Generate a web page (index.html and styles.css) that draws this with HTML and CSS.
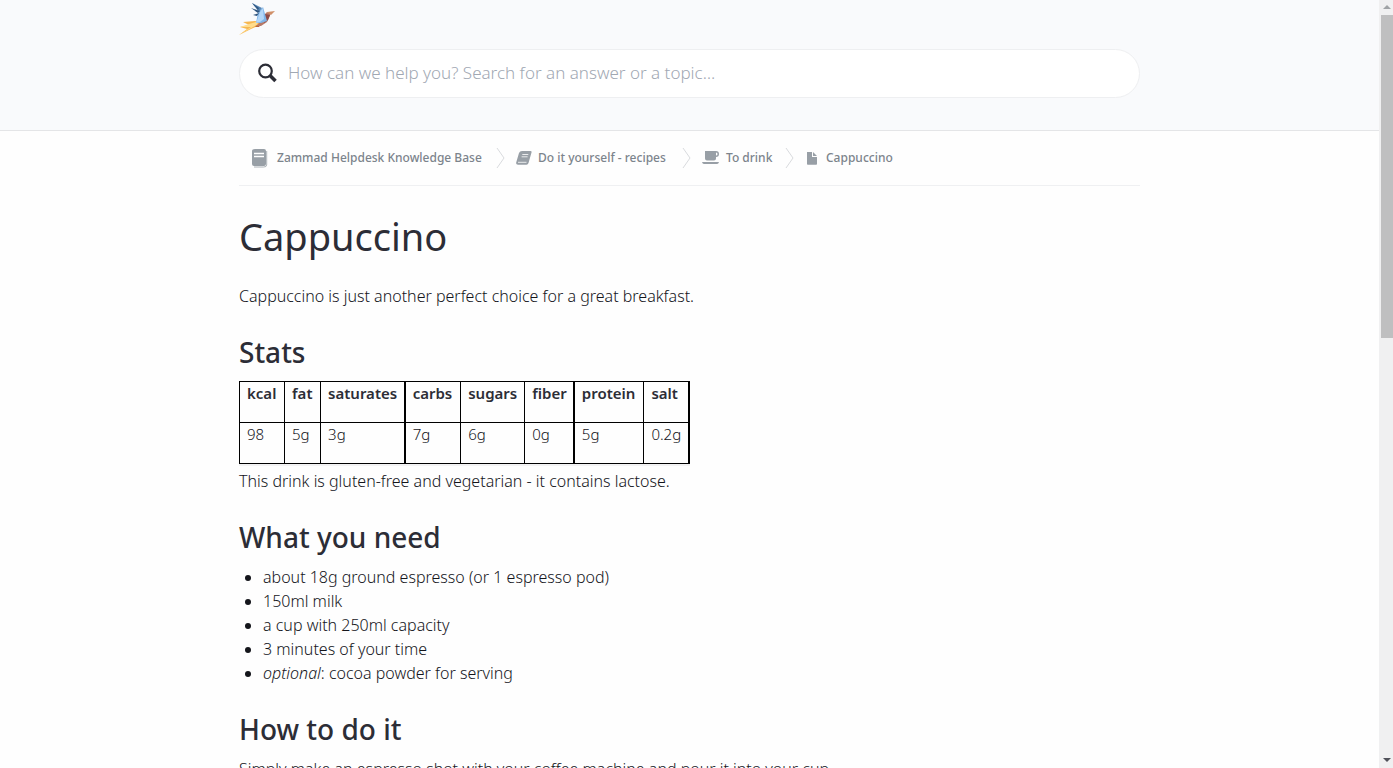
FILE: index.html
```html
<!DOCTYPE html>
<html lang="en">
<head>
<meta charset="utf-8">
<meta name="viewport" content="width=device-width, initial-scale=1">
<title>Cappuccino</title>
<link rel="stylesheet" href="styles.css">
</head>
<body>
<div class="window">
  <div class="page">
    <header class="header">
      <div class="container">
        <a class="logo" href="#" aria-label="Home">
          <svg width="36" height="32" viewBox="0 0 36 32" aria-hidden="true">
            <path fill="#f6b750" d="M0 32 8 26 1 24 10 22 4 19 16 18 20 19 21 22 12 26z"/>
            <path fill="#ffdc8c" d="M0 32 12 24 1 24 10 21 17 19 19 21z"/>
            <path fill="#b8683f" d="M18 22 23 20 20 24 16 24z"/>
            <path fill="#b77968" d="M25 12 28 9 32 10 30 15 28 19 22 23 18 23z"/>
            <path fill="#8c4b49" d="M26 11 31 12 29 17 25 20z"/>
            <path fill="#d08f68" d="M28 9 36 8 32 12z"/>
            <path fill="#7fb4e8" d="M17 20 19 10 24 4 28 18 22 20z"/>
            <path fill="#b3d6f8" d="M17 20 21 9 24 5 25 16 21 19z"/>
            <path fill="#5685b4" d="M13 0 23 5 20 9z"/>
            <path fill="#2f557f" d="M13 0 20 5 19 7zM12 5 21 8 19 10zM14 12 20 10 18 13z"/>
          </svg>
        </a>
        <form class="search">
          <svg class="search-icon" width="20" height="20" viewBox="0 0 20 20" aria-hidden="true"><circle cx="7.500" cy="8" r="6.300" fill="none" stroke="#2c2d36" stroke-width="2.200"/><path d="m12 12.500 5.500 5.500" stroke="#2c2d36" stroke-width="3.500"/></svg>
          <input class="search-input" type="search" aria-label="Search" placeholder="How can we help you? Search for an answer or a topic…">
        </form>
      </div>
    </header>
    <main class="container">
      <nav class="breadcrumbs" aria-label="Breadcrumbs">
        <a class="crumb crumb-base" href="#">
          <svg width="17" height="20" viewBox="0 0 17 20" aria-hidden="true"><path d="M3 1h9q2 0 2 2v13q0 2-2 2H2q-2 0-2-2V3q0-2 3-2z" fill="#989fa6"/><path d="M2 5.500h10M2 8.500h10" stroke="#fff" stroke-width="1.300"/><path d="M14.700 3v14q0 2-3 2H2" fill="none" stroke="#989fa6" stroke-width=".8"/></svg>
          <span>Zammad Helpdesk Knowledge Base</span></a>
        <svg class="arrow" width="10" height="22" viewBox="0 0 10 22" aria-hidden="true"><path d="m1 1 7 10-7 10"/></svg>
        <a class="crumb crumb-recipes" href="#">
          <svg width="16" height="16" viewBox="0 0 16 16" aria-hidden="true"><path fill="#989fa6" d="M6 1h8.500q1.500.2 1 1.500L12.500 13q-.5 1.700-2 1.700H2Q-.3 14.700.2 12.500L3 3q.7-2 3-2z"/><path d="M6.300 4.500h6M5.600 6.800h6M2 12.300h8.500" fill="none" stroke="#fff" stroke-width=".8"/></svg>
          <span>Do it yourself - recipes</span></a>
        <svg class="arrow" width="10" height="22" viewBox="0 0 10 22" aria-hidden="true"><path d="m1 1 7 10-7 10"/></svg>
        <a class="crumb crumb-drink" href="#">
          <svg width="18" height="16" viewBox="0 0 18 16" aria-hidden="true"><path fill="#989fa6" fill-rule="evenodd" d="M3 1h11q3 0 3 3t-3 3v1.500q0 2-2 2H5q-2 0-2-2zm11 1.500v3q1.500 0 1.500-1.500T14 2.500zM0 12h17q-.5 2-2 2H2q-1.500 0-2-2z"/></svg>
          <span>To drink</span></a>
        <svg class="arrow" width="10" height="22" viewBox="0 0 10 22" aria-hidden="true"><path d="m1 1 7 10-7 10"/></svg>
        <a class="crumb crumb-page" href="#" aria-current="page">
          <svg width="10" height="14" viewBox="0 0 10 14" aria-hidden="true"><path fill="#989fa6" d="M0 1h5v5h5v7q0 .8-.8.8H.8Q0 13.800 0 13zM6 1l4 4H6z"/></svg>
          <span>Cappuccino</span></a>
      </nav>
      <article class="article">
        <h1>Cappuccino</h1>
        <p>Cappuccino is just another perfect choice for a great breakfast.</p>
        <h2>Stats</h2>
        <table class="stats">
          <colgroup><col class="c45"><col class="c36"><col class="c84"><col class="c56"><col class="c64"><col class="c49"><col class="c70"><col class="c45"></colgroup>
          <thead><tr><th>kcal</th><th>fat</th><th class="thick">saturates</th><th>carbs</th><th>sugars</th><th class="thick">fiber</th><th>protein</th><th class="thick">salt</th></tr></thead>
          <tbody><tr><td>98</td><td>5g</td><td class="thick">3g</td><td>7g</td><td>6g</td><td class="thick">0g</td><td>5g</td><td class="thick">0.2g</td></tr></tbody>
        </table>
        <p>This drink is gluten-free and vegetarian - it contains lactose.</p>
        <h2>What you need</h2>
        <ul>
          <li>about 18g ground espresso (or 1 espresso pod)</li>
          <li>150ml milk</li>
          <li>a cup with 250ml capacity</li>
          <li>3 minutes of your time</li>
          <li><i>optional</i>: cocoa powder for serving</li>
        </ul>
        <h2>How to do it</h2>
        <p>Simply make an espresso shot with your coffee machine and pour it into your cup.</p>
      </article>
    </main>
  </div>
  <div class="scrollbar" aria-hidden="true">
    <svg width="14" height="15" viewBox="0 0 14 15"><path fill="#a0a3a6" d="M8 5 4 9h8z"/></svg>
    <div class="thumb"></div>
    <svg class="down" width="14" height="15" viewBox="0 0 14 15"><path fill="#50515a" d="M4 5h8L8 9z"/></svg>
  </div>
</div>
</body>
</html>
```
FILE: styles.css
```css
* { box-sizing: border-box; }
body {
  margin: 0;
  background: #fefefe;
  color: #2c2d36;
  font: 350 16px/24px "Noto Sans", "Open Sans", sans-serif;
}
.window { display: flex; height: 100vh; overflow: hidden; }
.page { flex: 1; min-width: 0; overflow: hidden; }
.container { width: 100%; max-width: 901px; margin: 0 auto; }
.header { padding: 3px 24px 32px; background: #f9fafc; border-bottom: 1px solid #e4e5e7; }
.logo { display: block; width: 36px; height: 32px; margin-bottom: 14px; }
.logo svg, .search svg, .crumb svg, .arrow, .scrollbar svg { display: block; flex: none; }
.search {
  display: flex;
  align-items: center;
  gap: 10px;
  height: 49px;
  padding: 0 24px 1px 18px;
  background: #fff;
  border: 1px solid #eeeff1;
  border-radius: 25px;
}
.search-input {
  flex: 1;
  min-width: 0;
  padding: 0;
  border: 0;
  outline: 0;
  background: none;
  color: inherit;
  font: 300 17px/24px "Noto Sans", "Open Sans", sans-serif;
}
.search-input::placeholder { color: #a1a8b3; opacity: 1; }
.breadcrumbs {
  display: flex;
  align-items: center;
  gap: 10px;
  height: 55px;
  padding-left: 13px;
  border-bottom: 1px solid #eff0f2;
  color: #7c848c;
  font-size: 12px;
  font-weight: 500;
  white-space: nowrap;
}
.crumb { display: flex; align-items: center; gap: 6px; color: inherit; text-decoration: none; }
.crumb-base { gap: 8px; width: 234px; }
.crumb-recipes { width: 156px; }
.crumb-drink { width: 73px; }
.crumb-page { gap: 9px; padding-left: 2px; }
.arrow { fill: none; stroke: #d9dbde; }
h1, h2, p, ul { margin: 0; }
h1 { padding: 22px 0 20px; font-size: 38px; line-height: 56px; font-weight: 400; }
h2 { padding: 24px 0 8px; font-size: 28px; line-height: 40px; font-weight: 500; }
p, ul, td { color: #14151b; }
.stats { table-layout: fixed; width: 451px; margin-top: 1px; border-collapse: collapse; box-shadow: 0 2px 0 #f2f2f3; }
.stats th, .stats td {
  height: 41px;
  padding: 0 7px;
  border: 1px solid #000;
  text-align: left;
  vertical-align: top;
  white-space: nowrap;
  font-size: 15px;
  line-height: 22px;
}
.stats th { font-weight: 600; }
.stats .thick { border-right-width: 2px; }
.c45 { width: 45px; }
.c36 { width: 36px; }
.c84 { width: 84px; }
.c56 { width: 56px; }
.c64 { width: 64px; }
.c49 { width: 49px; }
.c70 { width: 70px; }
.stats + p { padding-top: 5px; }
ul { padding-left: 24px; }
.scrollbar { display: flex; flex-direction: column; flex: none; width: 14px; background: #f0f0f1; }
.thumb { width: 12px; height: 42%; margin-left: 2px; background: #bfbfc0; }
.down { margin-top: auto; }
```
